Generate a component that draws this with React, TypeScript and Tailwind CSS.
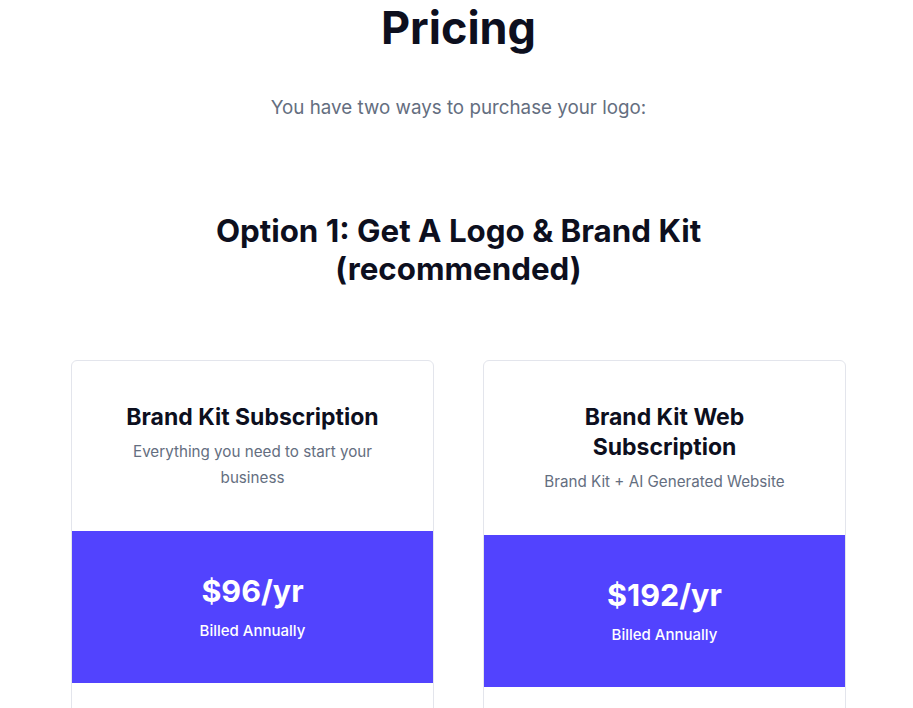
const plans = [
  {
    name: "Brand Kit Subscription",
    desc: "Everything you need to start your business",
    price: "$96/yr",
  },
  {
    name: "Brand Kit Web Subscription",
    desc: "Brand Kit + AI Generated Website",
    price: "$192/yr",
  },
];

function PlanCard({ plan }: { plan: (typeof plans)[number] }) {
  return (
    <div className="flex flex-col border border-[#e3e5ec] rounded-[6px] bg-white overflow-hidden min-h-[360px]">
      <div className="px-10 pt-[41px] pb-10 text-center">
        <h3 className="text-[23px] leading-[30px] font-bold text-[#0d0f1e]">
          {plan.name}
        </h3>
        <p className="mt-[7px] text-[15.2px] leading-[26px] text-[#646e80]">
          {plan.desc}
        </p>
      </div>
      <div className="bg-[#5243fe] pt-[42px] pb-[40px] text-center text-white">
        <div className="text-[30.5px] leading-[36px] font-bold">{plan.price}</div>
        <div className="mt-[10px] text-[15px] leading-[24px] font-medium">
          Billed Annually
        </div>
      </div>
      <div className="flex-1" />
    </div>
  );
}

export default function App() {
  return (
    <div
      className="min-h-screen bg-white pl-[4px] text-center"
      style={{ fontFamily: "Inter, 'Noto Sans', sans-serif" }}
    >
      <h1 className="pt-[2px] text-[45px] leading-[52px] font-bold text-[#0d0f1e]">
        Pricing
      </h1>
      <p className="mt-[41px] text-[18.8px] leading-[26px] text-[#646e80]">
        You have two ways to purchase your logo:
      </p>
      <h2 className="mt-[91px] mx-auto max-w-[540px] text-[31.3px] leading-[38px] font-bold text-[#0d0f1e]">
        Option 1: Get A Logo &amp; Brand Kit (recommended)
      </h2>
      <div className="mt-[72px] mx-auto w-[775px] grid grid-cols-2 gap-[49px] items-start">
        {plans.map((p) => (
          <PlanCard key={p.name} plan={p} />
        ))}
      </div>
    </div>
  );
}
